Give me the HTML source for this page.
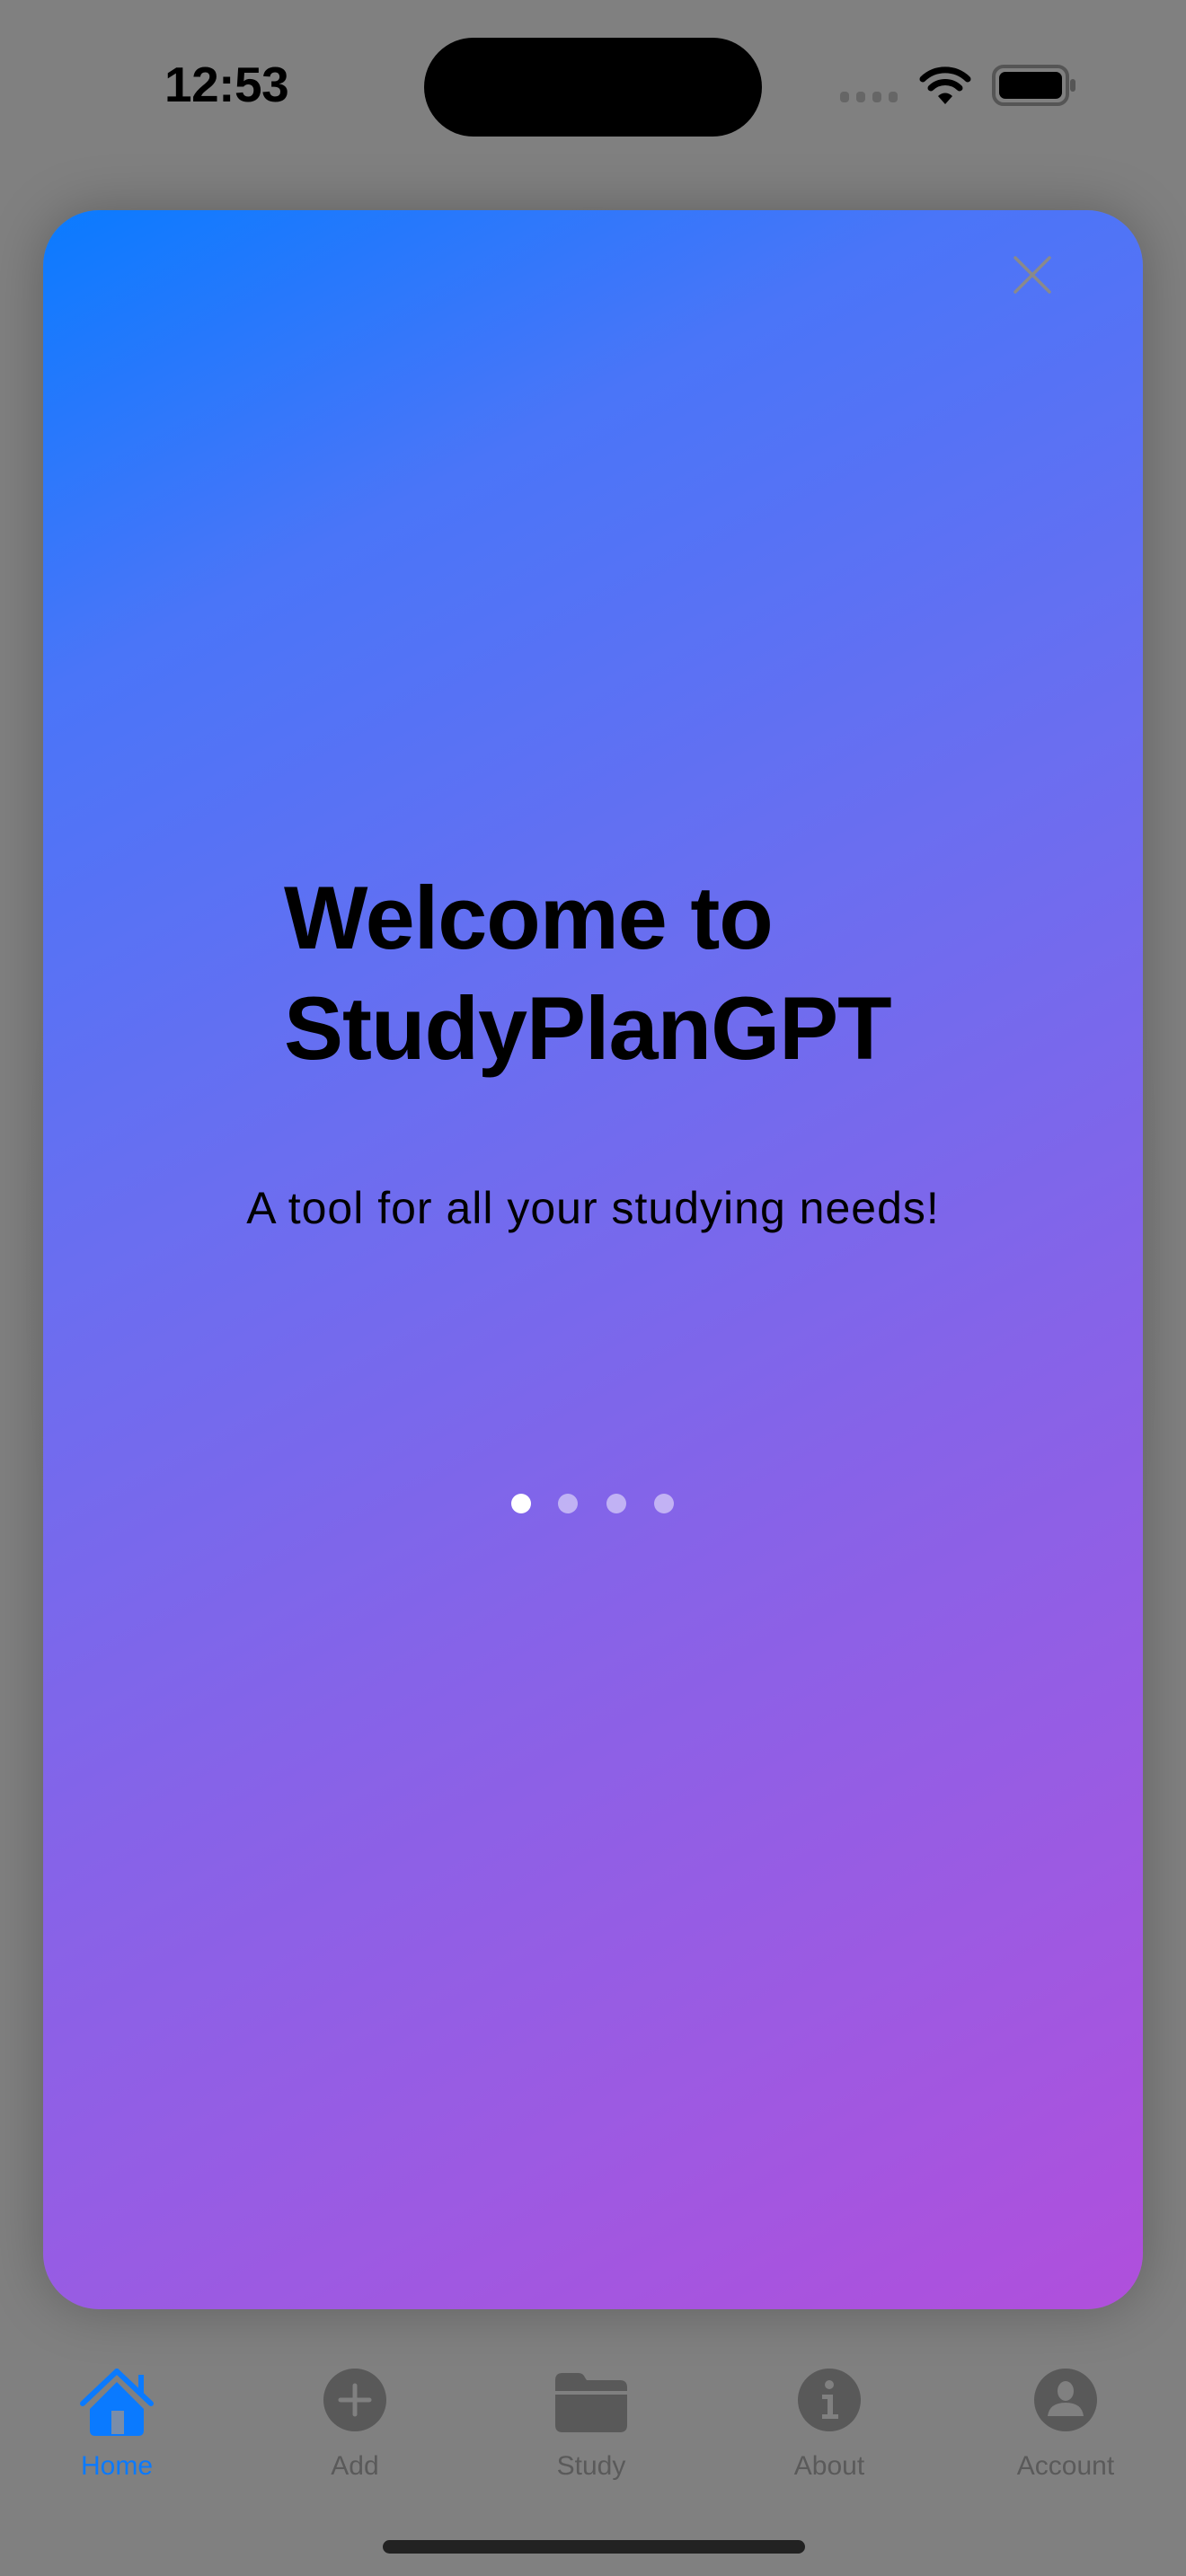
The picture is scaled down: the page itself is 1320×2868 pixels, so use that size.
<!DOCTYPE html>
<html><head><meta charset="utf-8">
<style>
html,body{margin:0;padding:0}
body{width:1320px;height:2868px;position:relative;overflow:hidden;background:#808080;font-family:"Liberation Sans",sans-serif}
.abs{position:absolute}
.time{left:183px;top:62px;font-size:55px;font-weight:bold;color:#000;letter-spacing:-0.5px}
.island{left:472px;top:42px;width:376px;height:110px;border-radius:55px;background:#000}
.shade{left:0;top:180px;width:1320px;height:2440px;background:radial-gradient(ellipse at center,rgba(0,0,0,0.12),rgba(0,0,0,0) 70%)}
.card{left:48px;top:234px;width:1224px;height:2337px;border-radius:62px;
background:linear-gradient(152deg,#0a7bff 0%,#4a75f8 18%,#6a6ef0 40%,#8663e8 62%,#9c5ae2 82%,#b04fdc 100%);
box-shadow:0 0 60px rgba(0,0,0,0.25)}
.title{left:316px;top:960px;font-size:99px;font-weight:bold;line-height:123px;color:#000;white-space:nowrap;letter-spacing:-1px}
.sub{left:0;width:1320px;top:1316px;text-align:center;font-size:50px;color:#000;letter-spacing:1px}
.dot{width:22px;height:22px;border-radius:11px;background:rgba(255,255,255,0.5);top:1663px}
.lab{top:2729px;width:200px;text-align:center;font-size:30px;color:#5a5a5a}
.ic{top:2636px}
</style></head><body>
<div class="abs shade"></div>
<div class="abs time">12:53</div>
<div class="abs island"></div>
<svg class="abs" style="left:935px;top:100px" width="70" height="16"><g fill="#666"><rect x="0" y="2" width="10" height="12" rx="4"/><rect x="18" y="2" width="10" height="12" rx="4"/><rect x="36" y="2" width="10" height="12" rx="4"/><rect x="54" y="2" width="10" height="12" rx="4"/></g></svg>
<svg class="abs" style="left:1022px;top:72px" width="60" height="46" viewBox="0 0 60 46"><g fill="none" stroke="#000" stroke-width="7" stroke-linecap="round"><path d="M5 16 A36 36 0 0 1 55 16"/><path d="M14 26 A23 23 0 0 1 46 26"/></g><path d="M22 35 A11 11 0 0 1 38 35 L30 44 Z" fill="#000"/></svg>
<svg class="abs" style="left:1104px;top:72px" width="96" height="46"><rect x="2" y="2" width="82" height="42" rx="11" fill="none" stroke="#555" stroke-width="4"/><rect x="8" y="8" width="70" height="30" rx="7" fill="#000"/><rect x="87" y="16" width="6" height="14" rx="3" fill="#555"/></svg>
<div class="abs card"></div>
<svg class="abs" style="left:1127px;top:284px" width="44" height="44"><g stroke="#8a8a8a" stroke-width="3.5" stroke-linecap="round"><line x1="3" y1="3" x2="41" y2="41"/><line x1="41" y1="3" x2="3" y2="41"/></g></svg>
<div class="abs title">Welcome to<br>StudyPlanGPT</div>
<div class="abs sub">A tool for all your studying needs!</div>
<div class="abs dot" style="left:569px;background:#fff"></div>
<div class="abs dot" style="left:621px"></div>
<div class="abs dot" style="left:675px"></div>
<div class="abs dot" style="left:728px"></div>
<svg class="abs ic" style="left:88px" width="84" height="76" viewBox="0 0 84 76"><path d="M42 4 L4 40" stroke="#0a7aff" stroke-width="6" stroke-linecap="round"/><path d="M42 4 L80 40" stroke="#0a7aff" stroke-width="6" stroke-linecap="round"/><rect x="66" y="8" width="6" height="20" fill="#0a7aff"/><path d="M42 16 L12 46 L12 70 Q12 76 18 76 L66 76 Q72 76 72 70 L72 46 Z" fill="#0a7aff"/><rect x="36" y="48" width="14" height="26" fill="#7a8da8"/></svg>
<svg class="abs ic" style="left:359px" width="72" height="72"><circle cx="36" cy="36" r="35" fill="#595959"/><g stroke="#808080" stroke-width="5" stroke-linecap="round"><line x1="36" y1="20" x2="36" y2="52"/><line x1="20" y1="36" x2="52" y2="36"/></g></svg>
<svg class="abs ic" style="left:618px;top:2642px" width="80" height="66"><path d="M0 8 Q0 0 8 0 L26 0 Q31 0 33 5 L35 8 L72 8 Q80 8 80 16 L80 58 Q80 66 72 66 L8 66 Q0 66 0 58 Z" fill="#595959"/><rect x="0" y="20" width="80" height="4" fill="#808080"/></svg>
<svg class="abs ic" style="left:887px" width="72" height="72"><circle cx="36" cy="36" r="35" fill="#595959"/><circle cx="36" cy="19" r="5" fill="#808080"/><path d="M28 30 L40 30 L40 52 L46 52 L46 57 L28 57 L28 52 L34 52 L34 35 L28 35 Z" fill="#808080"/></svg>
<svg class="abs ic" style="left:1150px" width="72" height="72"><circle cx="36" cy="36" r="35" fill="#595959"/><ellipse cx="36" cy="26" rx="9" ry="11" fill="#808080"/><path d="M16 54 Q18 39 36 39 Q54 39 56 54 Z" fill="#808080"/></svg>
<div class="abs lab" style="left:30px;color:#0a7aff">Home</div>
<div class="abs lab" style="left:295px">Add</div>
<div class="abs lab" style="left:558px">Study</div>
<div class="abs lab" style="left:823px">About</div>
<div class="abs lab" style="left:1086px">Account</div>
<div class="abs" style="left:426px;top:2828px;width:470px;height:15px;border-radius:8px;background:#222"></div>
</body></html>
